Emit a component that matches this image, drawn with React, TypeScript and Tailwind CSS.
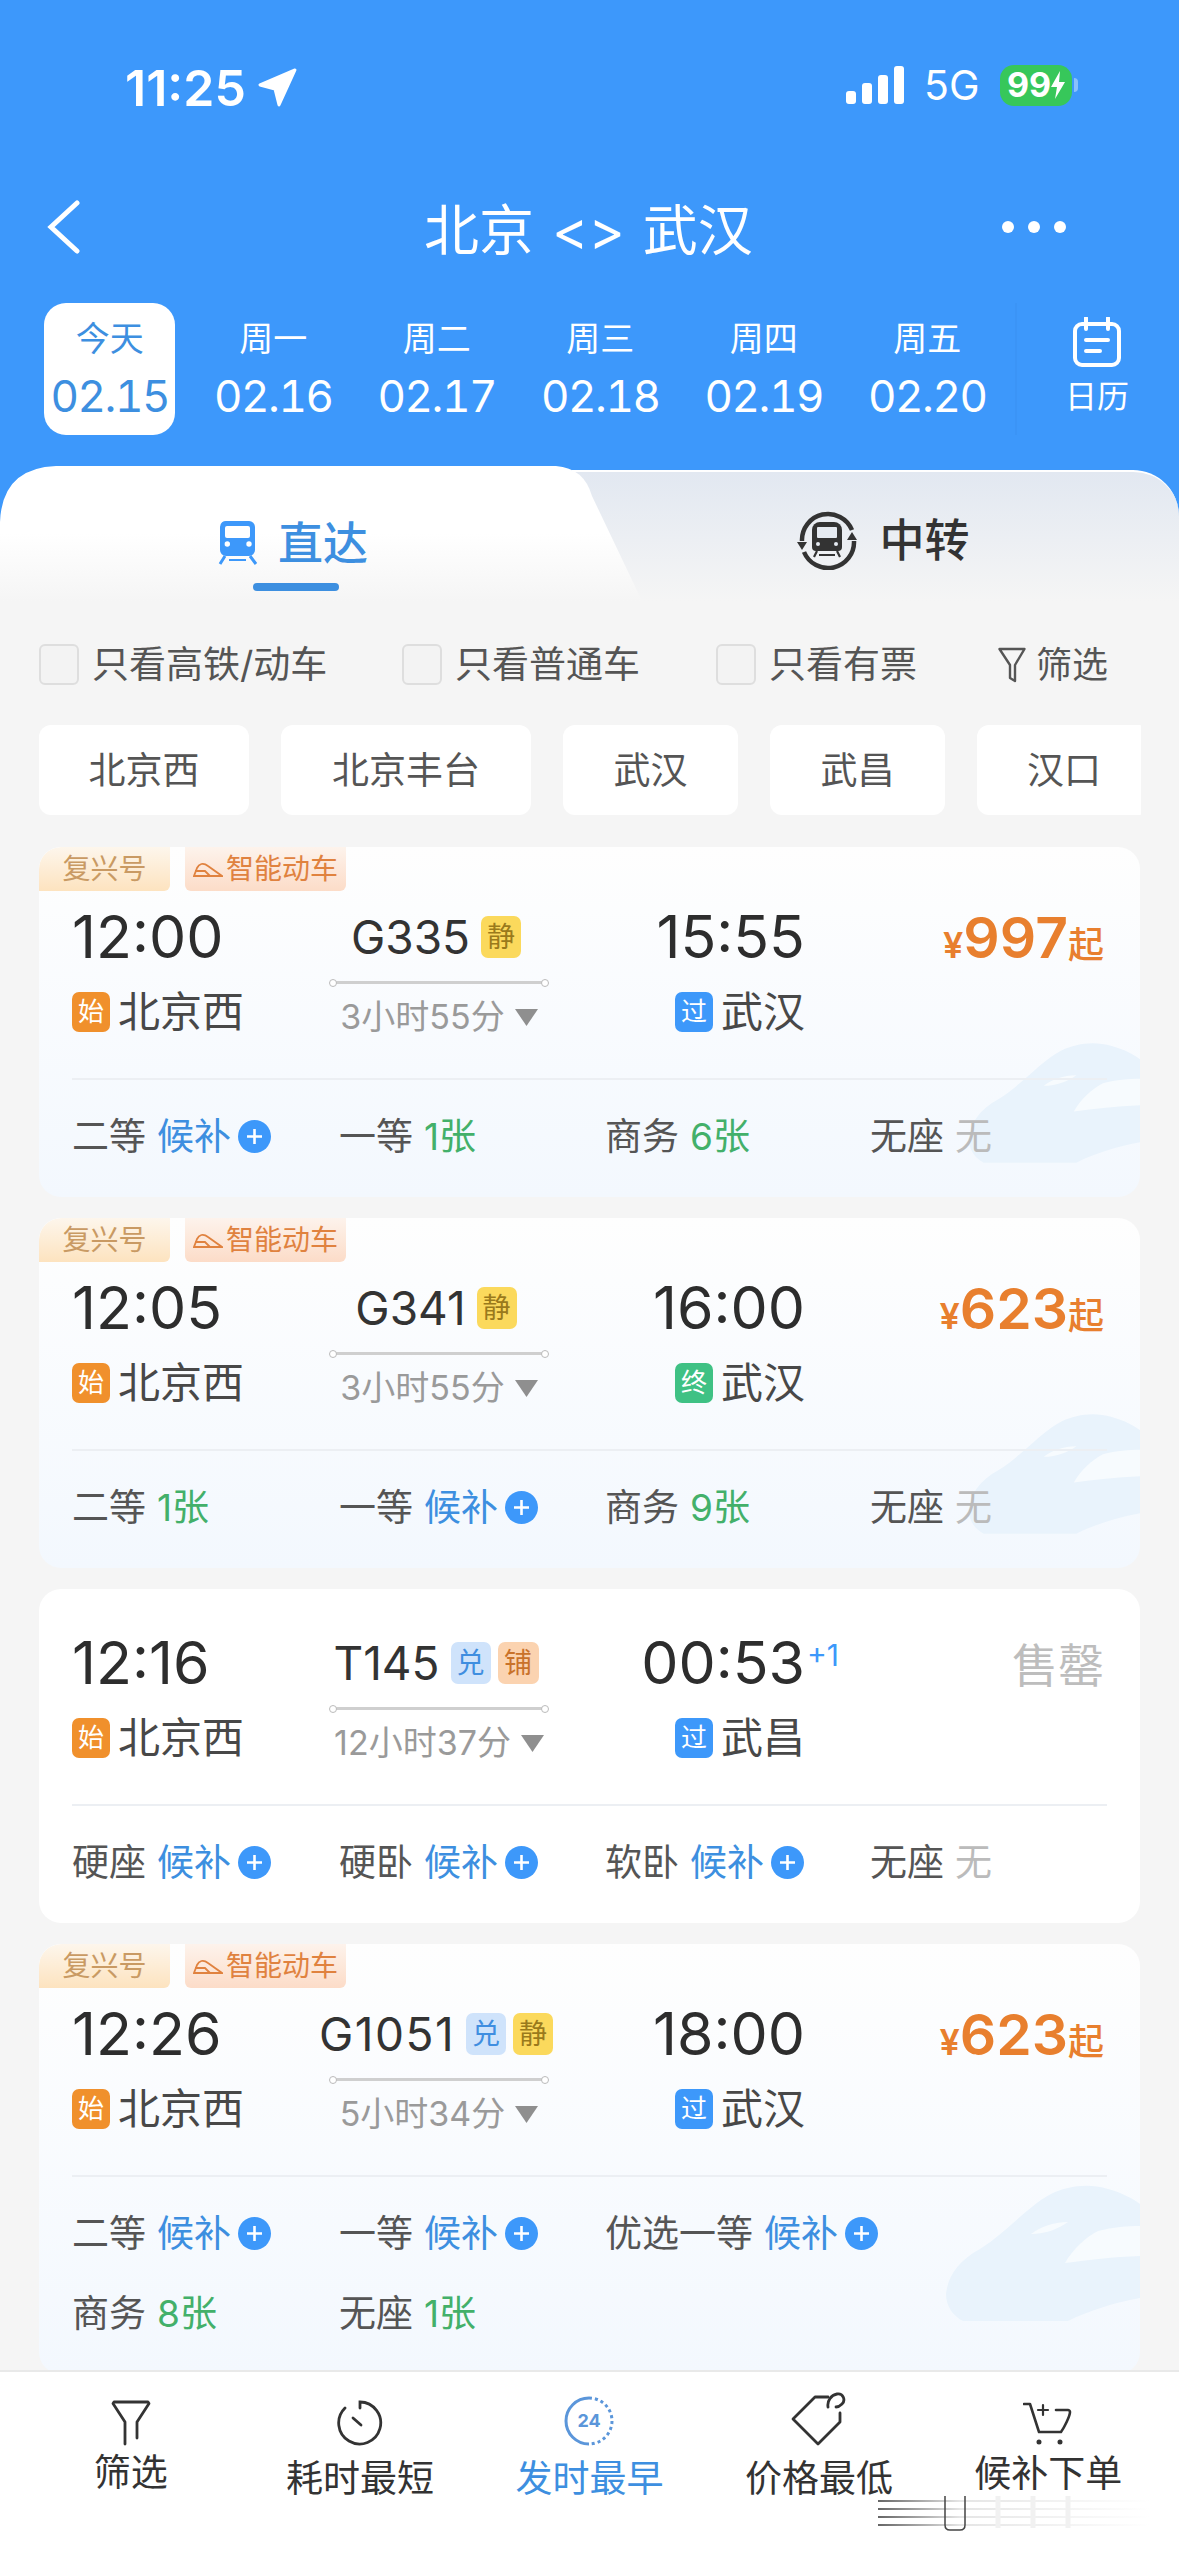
import { ReactNode } from 'react';

const days = [
  { w: '今天', d: '02.15', active: true },
  { w: '周一', d: '02.16' },
  { w: '周二', d: '02.17' },
  { w: '周三', d: '02.18' },
  { w: '周四', d: '02.19' },
  { w: '周五', d: '02.20' },
];

const chips = [
  { t: '北京西', w: 'w-[210px]' },
  { t: '北京丰台', w: 'w-[250px]' },
  { t: '武汉', w: 'w-[175px]' },
  { t: '武昌', w: 'w-[175px]' },
  { t: '汉口', w: 'w-[174px]' },
];

type Seat = { n: string; v: string; k: 'wait' | 'ok' | 'none' };

const trains = [
  {
    fuxing: true,
    dep: '12:00',
    no: 'G335',
    badges: ['静'],
    arr: '15:55',
    from: '北京西',
    to: '武汉',
    toBadge: '过',
    dur: '3小时55分',
    price: '997',
    seats: [
      { n: '二等', v: '候补', k: 'wait' },
      { n: '一等', v: '1张', k: 'ok' },
      { n: '商务', v: '6张', k: 'ok' },
      { n: '无座', v: '无', k: 'none' },
    ] as Seat[],
  },
  {
    fuxing: true,
    dep: '12:05',
    no: 'G341',
    badges: ['静'],
    arr: '16:00',
    from: '北京西',
    to: '武汉',
    toBadge: '终',
    dur: '3小时55分',
    price: '623',
    seats: [
      { n: '二等', v: '1张', k: 'ok' },
      { n: '一等', v: '候补', k: 'wait' },
      { n: '商务', v: '9张', k: 'ok' },
      { n: '无座', v: '无', k: 'none' },
    ] as Seat[],
  },
  {
    fuxing: false,
    dep: '12:16',
    no: 'T145',
    badges: ['兑', '铺'],
    arr: '00:53',
    plus: true,
    from: '北京西',
    to: '武昌',
    toBadge: '过',
    dur: '12小时37分',
    seats: [
      { n: '硬座', v: '候补', k: 'wait' },
      { n: '硬卧', v: '候补', k: 'wait' },
      { n: '软卧', v: '候补', k: 'wait' },
      { n: '无座', v: '无', k: 'none' },
    ] as Seat[],
  },
  {
    fuxing: true,
    dep: '12:26',
    no: 'G1051',
    badges: ['兑', '静'],
    arr: '18:00',
    from: '北京西',
    to: '武汉',
    toBadge: '过',
    dur: '5小时34分',
    price: '623',
    seats: [
      { n: '二等', v: '候补', k: 'wait' },
      { n: '一等', v: '候补', k: 'wait' },
      { n: '优选一等', v: '候补', k: 'wait' },
      { n: '', v: '', k: 'none' },
      { n: '商务', v: '8张', k: 'ok' },
      { n: '无座', v: '1张', k: 'ok' },
    ] as Seat[],
  },
];

function Badge({ t }: { t: string }) {
  const cls: Record<string, string> = {
    静: 'bg-[#fbd95c] text-[#9a7a1c] w-[40px] h-[42px] text-[28px]',
    兑: 'bg-[#cfe3fb] text-[#3f8ee0] w-[40px] h-[42px] text-[28px]',
    铺: 'bg-[#fbd3b0] text-[#c9722a] w-[41px] h-[42px] text-[28px]',
    始: 'bg-[#f0902c] text-white w-[38px] h-[40px] text-[26px]',
    过: 'bg-[#3d98fa] text-white w-[38px] h-[40px] text-[26px]',
    终: 'bg-[#3fc184] text-white w-[38px] h-[40px] text-[26px]',
  };
  return <span className={`flex items-center justify-center rounded-[7px] leading-none ${cls[t]}`}>{t}</span>;
}

function PlusDot() {
  return (
    <svg width="33" height="33" viewBox="0 0 33 33" className="ml-[7px] shrink-0">
      <circle cx="16.5" cy="16.5" r="16.5" fill="#3d98fa" />
      <path d="M9 16.5h15M16.5 9v15" stroke="#fff" strokeWidth="2.6" />
    </svg>
  );
}

function TrainMark({ big }: { big?: boolean }) {
  return (
    <svg
      viewBox="0 0 222 160"
      className={`absolute right-0 ${big ? 'top-[217px] h-[160px] w-[222px]' : 'top-[174px] h-[142px] w-[196px]'}`}
    >
      <path
        d="M28 133C30 115 40 100 62 88C90 70 110 45 133 33C150 25 170 22 190 28C205 32 215 38 222 43V137C195 142 170 150 150 160H45C35 155 28 145 28 133Z"
        fill="#e9f3fc"
      />
      <path d="M147 102C155 88 168 76 180 70C195 66 210 65 222 65V95C195 96 170 99 147 102Z" fill="#f7fbfe" />
      <path d="M113 73C122 66 135 61 150 61C140 68 128 73 113 73Z" fill="#f7fbfe" />
    </svg>
  );
}

function TrainCard({ t }: { t: (typeof trains)[number] }) {
  return (
    <div
      className={`relative shrink-0 overflow-hidden rounded-[22px] ${
        t.fuxing ? 'bg-gradient-to-b from-[#fefefe] to-[#f3f8fe]' : 'bg-white'
      }`}
    >
      {t.fuxing ? <TrainMark big={t.no === 'G1051'} /> : null}
      {t.fuxing ? (
        <div className="relative flex h-[44px] gap-[15px]">
          <div className="flex w-[131px] items-center justify-center rounded-tl-[22px] rounded-br-[6px] bg-gradient-to-b from-[#fdf6ec] to-[#fde3bf] text-[28px] leading-none text-[#c99a63]">
            复兴号
          </div>
          <div className="flex w-[161px] items-center justify-center gap-[3px] rounded-b-[6px] bg-gradient-to-b from-[#fdf3ec] to-[#fcdcc8] text-[28px] leading-none text-[#e0823f]">
            <svg width="30" height="16" viewBox="0 0 30 16" fill="none" stroke="#e0823f" strokeWidth="1.8">
              <path d="M1 15h28L15 5C10 1 6 3 4 7L1 15ZM2 10h10l5 5" />
            </svg>
            智能动车
          </div>
        </div>
      ) : null}
      <div className={`relative px-[33px] ${t.fuxing ? 'pt-[16px]' : 'pt-[44px]'}`}>
        <div className="flex">
          <div className="w-[258px]">
            <div className="h-[60px] text-[59px] leading-[60px] text-[#2d2d2d]">{t.dep}</div>
            <div className="mt-[20px] flex h-[50px] items-center gap-[8px]">
              <Badge t="始" />
              <span className="text-[42px] leading-none text-[#484848]">{t.from}</span>
            </div>
          </div>
          <div className="flex w-[218px] flex-col items-center">
            <div className="flex h-[60px] items-center pr-[6px]">
              <span className={`text-[46px] leading-none text-[#333] ${t.no === 'G1051' ? 'tracking-[1.5px]' : ''}`}>{t.no}</span>
              <span className="ml-[11px] flex gap-[7px]">
                {t.badges.map((b) => (
                  <Badge key={b} t={b} />
                ))}
              </span>
            </div>
            <div className="mt-[14px] flex h-[3px] w-full items-center bg-[#cfcfcf]">
              <span className="-ml-[1px] h-[8px] w-[8px] rounded-full border border-[#bbb] bg-white" />
              <span className="-mr-[1px] ml-auto h-[8px] w-[8px] rounded-full border border-[#bbb] bg-white" />
            </div>
            <div className="mt-[13px] flex h-[40px] items-center gap-[10px] whitespace-nowrap text-[34px] leading-none text-[#9a9a9a]">
              {t.dur}
              <svg width="23" height="17" viewBox="0 0 23 17">
                <path d="M0 0h23L11.5 17Z" fill="#8f8f8f" />
              </svg>
            </div>
          </div>
          <div className="flex w-[257px] flex-col items-end">
            <div className="relative h-[60px] text-[59px] leading-[60px] text-[#2d2d2d]">
              {t.arr}
              {t.plus ? (
                <span className="absolute left-full top-[2px] ml-[2px] text-[30px] leading-[40px] text-[#3d98fa]">+1</span>
              ) : null}
            </div>
            <div className="mt-[20px] flex h-[50px] items-center gap-[8px]">
              <Badge t={t.toBadge} />
              <span className="text-[42px] leading-none text-[#484848]">{t.to}</span>
            </div>
          </div>
          <div className="flex h-[60px] flex-1 items-center justify-end pr-[3px]">
            {t.price ? (
              <div className="flex items-baseline text-[#e87f2e]">
                <span className="text-[36px] font-semibold leading-none">¥</span>
                <span className="text-[57px] font-semibold leading-none">{t.price}</span>
                <span className="text-[36px] font-medium leading-none">起</span>
              </div>
            ) : (
              <span className="pt-[4px] text-[46px] leading-none text-[#bdbdbd]">售罄</span>
            )}
          </div>
        </div>
        <div className="mt-[41px] h-[2px] bg-[#eceff3]" />
        <div className="mt-[31px] grid grid-cols-[267px_266px_265px_1fr] gap-y-[30px] pb-[36px]">
          {t.seats.map((s, i) => (
            <div key={i} className="flex h-[50px] items-center whitespace-nowrap text-[37px] leading-none text-[#555]">
              {s.n}
              <span
                className={`ml-[11px] ${
                  s.k === 'wait' ? 'text-[#3d8fe0]' : s.k === 'ok' ? 'text-[#43b06a]' : 'text-[#bbb]'
                }`}
              >
                {s.v}
              </span>
              {s.k === 'wait' ? <PlusDot /> : null}
            </div>
          ))}
        </div>
      </div>
    </div>
  );
}

function Check({ label, className }: { label: string; className: string }) {
  return (
    <div className={`flex items-center gap-[13px] ${className}`}>
      <span className="h-[41px] w-[40px] rounded-[6px] border-2 border-[#dedede] bg-[#f3f3f3]" />
      <span className="text-[37px] leading-none text-[#555]">{label}</span>
    </div>
  );
}

function NavItem({ icon, label, active, pt }: { icon: ReactNode; label: string; active?: boolean; pt: string }) {
  return (
    <div className="flex flex-col items-center">
      <div className="flex h-[56px] items-end justify-center">{icon}</div>
      <div className={`${pt} text-[37px] leading-none ${active ? 'text-[#3d8fe0]' : 'text-[#333]'}`}>{label}</div>
    </div>
  );
}

export default function App() {
  return (
    <div className="flex h-[2556px] w-[1179px] flex-col overflow-hidden bg-[#f5f5f5] font-['Inter','Noto_Sans_CJK_SC',sans-serif]">
      <div className="bg-[#3d98fb] text-white">
        {/* status bar */}
        <div className="flex h-[176px] items-start pt-[63px]">
          <div className="ml-[125px] flex items-center gap-[12px]">
            <span className="text-[50px] font-semibold leading-[50px]">11:25</span>
            <svg width="40" height="40" viewBox="0 0 40 40">
              <path d="M37 2L2 17l15 4 4 16Z" fill="#fff" stroke="#fff" strokeWidth="3" strokeLinejoin="round" />
            </svg>
          </div>
          <div className="ml-auto mr-[101px] flex items-center">
            <svg width="58" height="38" viewBox="0 0 58 38">
              <rect x="0" y="25" width="10" height="13" rx="3" fill="#fff" />
              <rect x="16" y="17" width="10" height="21" rx="3" fill="#fff" />
              <rect x="32" y="9" width="10" height="29" rx="3" fill="#fff" />
              <rect x="48" y="0" width="10" height="38" rx="3" fill="#fff" />
            </svg>
            <span className="ml-[20px] w-[54px] whitespace-nowrap text-[41px] leading-[44px]">5G</span>
            <div className="ml-[22px] flex h-[41px] w-[72px] items-center justify-center rounded-[14px] bg-[#37c75a] text-[34px] font-bold leading-none">
              99
              <svg width="14" height="28" viewBox="0 0 14 28">
                <path d="M9 0L0 16h6l-2 12 10-17H8Z" fill="#fff" />
              </svg>
            </div>
            <span className="ml-[2px] h-[14px] w-[4px] rounded-r-full bg-white/40" />
          </div>
        </div>
        {/* title */}
        <div className="flex h-[102px] items-center justify-center px-[47px] text-[55px] leading-none">
          <svg width="33" height="54" viewBox="0 0 33 54" fill="none" stroke="#fff" strokeWidth="5" strokeLinecap="round">
            <path d="M30 3L4 27l26 24" />
          </svg>
          <div className="ml-[344px] flex items-center gap-[18px] pt-[6px]">
            <span>北京</span>
            <span>&lt;&gt;</span>
            <span>武汉</span>
          </div>
          <div className="ml-auto mr-[66px] flex gap-[14px]">
            <span className="h-[12px] w-[12px] rounded-full bg-white" />
            <span className="h-[12px] w-[12px] rounded-full bg-white" />
            <span className="h-[12px] w-[12px] rounded-full bg-white" />
          </div>
        </div>
        {/* dates */}
        <div className="mt-[25px] flex h-[132px] pl-[28px]">
          {days.map((d) => (
            <div key={d.d} className="flex w-[163.500px] justify-center">
              <div
                className={`flex h-[132px] w-[131px] flex-col items-center rounded-[22px] pt-[19px] ${
                  d.active ? 'bg-white text-[#3d8fe0]' : ''
                }`}
              >
                <span className="text-[34px] leading-[34px]">{d.w}</span>
                <span className="mt-[18px] text-[44px] leading-[44px] tracking-[-1.500px] tabular-nums">{d.d}</span>
              </div>
            </div>
          ))}
          <div className="ml-[6px] flex h-[132px] w-[164px] flex-col items-center border-l-2 border-[#3b94f6] pr-[2px] pt-[14px]">
            <svg width="50" height="50" viewBox="0 0 50 50" fill="none" stroke="#fff" strokeWidth="4">
              <rect x="3" y="7" width="44" height="41" rx="7" />
              <path d="M14 1v11M36 1v11M14 23h22M14 34h14" strokeLinecap="round" />
            </svg>
            <span className="mt-[10px] text-[32px] leading-[40px]">日历</span>
          </div>
        </div>
        {/* tabs */}
        <div className="mt-[31px] flex h-[135px]">
          <div className="relative z-10 flex w-[642px] shrink-0 flex-col items-center bg-gradient-to-b from-white from-50% to-[#f5f5f5] pt-[54px] [clip-path:path('M0_135L0_56Q2_2_56_0L556_0Q584_2_592_30L642_135Z')]">
            <div className="flex items-center gap-[20px] pr-[56px]">
              <svg width="40" height="46" viewBox="0 0 40 46" fill="none">
                <path d="M9 1h22a6 6 0 0 1 6 6v23a6 6 0 0 1-6 6H8a6 6 0 0 1-6-6V7a6 6 0 0 1 7-6Z" fill="#3d98fa" />
                <rect x="7" y="6" width="25" height="12" rx="2" fill="#fff" />
                <circle cx="9.300" cy="24" r="2.700" fill="#fff" />
                <circle cx="31" cy="24" r="2.700" fill="#fff" />
                <path d="M7 36L2 44M32 36l6 8" stroke="#3d98fa" strokeWidth="3" />
                <path d="M11 40h17" stroke="#3d98fa" strokeWidth="2" />
              </svg>
              <span className="text-[45px] font-medium leading-none text-[#3d8fe0]">直达</span>
            </div>
            <div className="mr-[50px] mt-[17px] h-[8px] w-[86px] rounded-full bg-[#3d8fe0]" />
          </div>
          <div className="-ml-[70px] mt-[4px] flex flex-1 items-start justify-center rounded-tr-[46px] border-t-2 border-white bg-gradient-to-b from-[#e2e8f1] to-[#f5f5f5] pl-[16px] pt-[38px]">
            <div className="flex items-center gap-[22px]">
              <svg width="60" height="60" viewBox="0 0 60 60" fill="none">
                <path d="M5 31a26 26 0 0 1 50-11M57 31a26 26 0 0 1-50 11" stroke="#333" strokeWidth="4.500" />
                <path d="M0 32h10l-5 8ZM60 30H50l5-8Z" fill="#333" />
                <path d="M23 12h14a8 8 0 0 1 8 8v17a4 4 0 0 1-4 4H19a4 4 0 0 1-4-4V20a8 8 0 0 1 8-8Z" fill="#333" />
                <rect x="20" y="17" width="20" height="11" rx="1" fill="#e6ebf2" />
                <circle cx="21" cy="34" r="2" fill="#e6ebf2" />
                <circle cx="39" cy="34" r="2" fill="#e6ebf2" />
                <path d="M20 41l-3 6M40 41l3 6M22 45h16" stroke="#333" strokeWidth="2.200" />
              </svg>
              <span className="text-[45px] font-medium leading-none text-[#333]">中转</span>
            </div>
          </div>
        </div>
      </div>

      {/* filters */}
      <div className="mt-[43px] flex h-[41px] shrink-0 items-center pl-[39px]">
        <Check label="只看高铁/动车" className="w-[363px]" />
        <Check label="只看普通车" className="w-[314px]" />
        <Check label="只看有票" className="w-[282px]" />
        <svg width="28" height="36" viewBox="0 0 28 36" fill="none" stroke="#555" strokeWidth="2.400">
          <path d="M1.500 2h25L17 18v16l-5-3V18Z" strokeLinejoin="round" />
        </svg>
        <span className="ml-[10px] text-[36px] leading-none text-[#555]">筛选</span>
      </div>

      {/* stations */}
      <div className="ml-[39px] mt-[40px] flex w-[1102px] shrink-0 gap-[32px] overflow-hidden">
        {chips.map((c) => (
          <div
            key={c.t}
            className={`flex h-[90px] shrink-0 items-center justify-center rounded-[12px] bg-white text-[37px] leading-none text-[#555] ${c.w}`}
          >
            {c.t}
          </div>
        ))}
      </div>

      {/* list */}
      <div className="mt-[32px] flex min-h-0 flex-1 flex-col gap-[21px] overflow-hidden px-[39px]">
        {trains.map((t) => (
          <TrainCard key={t.no} t={t} />
        ))}
      </div>

      {/* bottom */}
      <div className="relative grid h-[186px] shrink-0 grid-cols-5 border-t-2 border-[#e9e9e9] bg-white px-[16px] pt-[18px]">
        <NavItem
          pt="mt-[8px]"
          label="筛选"
          icon={
            <svg width="40" height="46" viewBox="0 0 40 46" fill="none" stroke="#333" strokeWidth="2.800" strokeLinecap="round" strokeLinejoin="round">
              <path d="M14 44V22L2 3.500 3 2h34l1 1.500L26 22v16" />
            </svg>
          }
        />
        <NavItem
          pt="mt-[14px]"
          label="耗时最短"
          icon={
            <svg width="46" height="46" viewBox="0 0 46 46" fill="none" stroke="#333" strokeWidth="2.800" strokeLinecap="round">
              <path d="M23 8V2a21 21 0 1 1-15 6" />
              <path d="M16 18l8 7" />
            </svg>
          }
        />
        <NavItem
          active
          pt="mt-[14px]"
          label="发时最早"
          icon={
            <svg width="50" height="50" viewBox="0 0 50 50" fill="none">
              <path d="M25 2a23 23 0 0 0 0 46" stroke="#5b96da" strokeWidth="3" />
              <path d="M25 2a23 23 0 0 1 0 46" stroke="#5b96da" strokeWidth="3" strokeDasharray="3 3" />
              <text x="25" y="31" textAnchor="middle" fontSize="18" fontWeight="700" fill="#5b96da">
                24
              </text>
            </svg>
          }
        />
        <NavItem
          pt="mt-[14px]"
          label="价格最低"
          icon={
            <svg width="56" height="54" viewBox="0 0 56 54" fill="none" stroke="#333" strokeWidth="2.800" strokeLinecap="round" strokeLinejoin="round">
              <path d="M37 5H24L2 27l25 25 22-22v-9" />
              <path d="M37 15C36 9 40 3 46 2C52 1 55 8 51 12C49 14 47 15 45 15" />
            </svg>
          }
        />
        <NavItem
          pt="mt-[9px]"
          label="候补下单"
          icon={
            <svg width="50" height="44" viewBox="0 0 50 44" fill="none" stroke="#333" strokeWidth="2.600" strokeLinecap="round" strokeLinejoin="round">
              <path d="M1 2h6l9 28h22c3-4 9-16 9-20 0-1-1-2-2-2H33" />
              <path d="M20 3v10M15 8h10" strokeWidth="2.200" />
              <path d="M16 40v.1M37 40v.1" strokeWidth="5" />
            </svg>
          }
        />
        {/* watermark */}
        <svg width="272" height="38" viewBox="0 0 272 38" className="absolute left-[878px] top-[122px]" fill="none">
          <defs>
            <linearGradient id="wm" x1="0" x2="1">
              <stop offset="0" stopColor="#666" />
              <stop offset="0.300" stopColor="#e5e5e5" />
              <stop offset="1" stopColor="#fff" />
            </linearGradient>
          </defs>
          <path d="M0 7h272M0 15h272M0 23h272M0 31h272" stroke="url(#wm)" strokeWidth="2" />
          <path d="M67 2v29q0 5 5 5h10q5 0 5-5V2" stroke="#444" strokeWidth="1.500" />
          <path d="M120 2v32M155 2v32M190 2v32" stroke="#f1f1f1" strokeWidth="5" />
        </svg>
      </div>
    </div>
  );
}
